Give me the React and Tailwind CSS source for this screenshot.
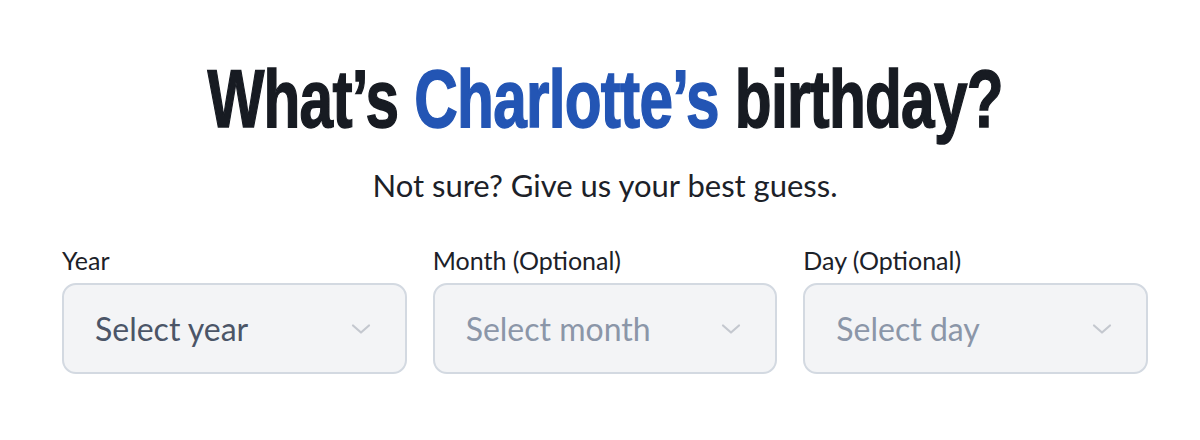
import React from 'react';

const Chevron = () => (
    <svg width="22" height="12" viewBox="0 0 22 12" fill="none" stroke="#c4c8cf" strokeWidth="2.2" strokeLinecap="round" strokeLinejoin="round">
        <path d="M3 2.5l8 7 8-7" />
    </svg>
);

const fields = [
    { label: 'Year', placeholder: 'Select year', dark: true },
    { label: 'Month (Optional)', placeholder: 'Select month' },
    { label: 'Day (Optional)', placeholder: 'Select day' },
];

export default function App() {
    return (
        <div className="min-h-[440px] bg-white font-['Lato',sans-serif] pt-[58px] pl-[62px] pr-[52px]">
            <div className="text-center">
                <h1 className="inline-block whitespace-nowrap scale-x-[0.735] text-[#171b22] font-['Liberation_Sans',sans-serif] font-bold text-[82px] leading-[82px] tracking-[-1px] [-webkit-text-stroke:1.5px_currentColor]">
                    What’s <span className="text-[#2355b4]">Charlotte’s</span> birthday?
                </h1>
            </div>
            <p className="mt-[26px] text-center text-[31px] leading-[38px] text-[#1c2128]">
                Not sure? Give us your best guess.
            </p>
            <div className="mt-[41px] grid grid-cols-3 gap-x-[26px]">
                {fields.map(f => (
                    <div key={f.label} className="flex flex-col">
                        <label className="text-[25px] leading-[31px] text-[#1c2128] mb-[7px]">{f.label}</label>
                        <div className="h-[91px] rounded-[14px] border-2 border-[#d3d9e1] bg-[#f3f4f6] flex items-center justify-between pl-[31px] pr-[33px]">
                            <span className={`text-[32px] leading-[38px] ${f.dark ? 'text-[#4b5567]' : 'text-[#8b96a8]'}`}>{f.placeholder}</span>
                            <Chevron />
                        </div>
                    </div>
                ))}
            </div>
        </div>
    );
}
